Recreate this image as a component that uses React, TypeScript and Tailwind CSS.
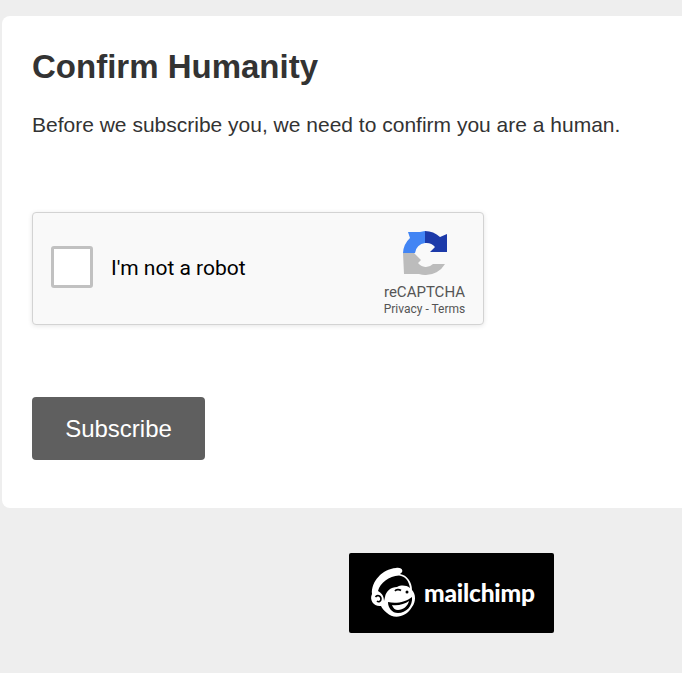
export default function App() {
  return (
    <div className="h-[673px] w-[682px] overflow-hidden bg-[#eeeeee] pt-4 pl-[2px] font-['Liberation_Sans',Arial,sans-serif]">
      <div className="h-[492px] w-[720px] rounded-[8px] bg-white pl-[30px] pt-[31px]">
        <h1 className="text-[33px] leading-[40px] font-bold text-[#333333]">Confirm Humanity</h1>
        <p className="mt-[22px] text-[21px] leading-[32px] text-[#333333]">
          Before we subscribe you, we need to confirm you are a human.
        </p>
        <div className="mt-[71px] flex h-[113px] w-[452px] items-center justify-between rounded-[4px] border border-[#d3d3d3] bg-[#f9f9f9] pl-[18px] pr-[17px] shadow-[0_1px_5px_rgba(0,0,0,0.1)]">
          <div className="flex items-center gap-[18px]">
            <div className="mb-[3px] h-[42px] w-[42px] rounded-[3px] border-[3px] border-[#c1c1c1] bg-white" />
            <span className="mt-[1px] font-['Roboto',sans-serif] text-[21px] text-black">I'm not a robot</span>
          </div>
          <div className="flex w-[83px] shrink-0 flex-col items-center pt-[11px] font-['Roboto',sans-serif]">
            <svg width="44" height="45" viewBox="0 0 44 45">
              <path d="M5 1 L17 1 L22 0 V12 A11 11 0 0 0 12 22 H0 A22 22 0 0 1 7 7 Z" fill="#4285f4" />
              <path d="M22 0 A22 22 0 0 1 37 6 L44 3 V21 H27 L32 16 A11 11 0 0 0 22 12 Z" fill="#1c3aa9" />
              <path d="M0 22 H11 L18 29 L15 32 A10 10 0 0 0 30 33 H42 A22 22 0 0 1 22 44 C20 44 18 43.7 16 43 H1 Z" fill="#bcbcbc" />
            </svg>
            <span className="mt-[7px] whitespace-nowrap text-[15px] leading-[18px] text-[#555555]">reCAPTCHA</span>
            <span className="whitespace-nowrap text-[12px] leading-[16px] text-[#555555]">Privacy - Terms</span>
          </div>
        </div>
        <button className="mt-[72px] flex h-[63px] w-[173px] items-center justify-center rounded-[4px] bg-[#5f5f5f] text-[24px] text-white">
          Subscribe
        </button>
      </div>
      <div className="ml-[347px] mt-[45px] flex h-[80px] w-[205px] items-center rounded-[2px] bg-black pl-[17px]">
        <svg width="56" height="58" viewBox="0 0 56 58" fill="none" className="shrink-0">
          <path d="M6 30 C5 18 16 5 30 4 C37 3 38 8 34 10 C41 11 46 18 46 26 C50 30 50 38 46 43 C40 54 27 55 21 49 C18 47 16 44 15 42 C8 43 3 36 6 30 Z" fill="white" />
          <path d="M12 27 C14 19 23 12 33 11.5 C39 12 43 17 44 24 C40 21 35 21 31 23 C25 23 20 27 19 33 L18 37 C18 31 15 29 12 27 Z" fill="black" />
          <path d="M9.5 33 C11 30.5 15 31.5 15 35 C15 37.5 12.5 38.5 11 37" stroke="black" strokeWidth="1.6" />
          <path d="M29 27 C30 25.5 33 25 35 26.5" stroke="black" strokeWidth="1.6" />
          <circle cx="41" cy="28" r="1.5" fill="black" />
          <path d="M22 38 C30 40 40 38 46 33 C47 42 40 49 32 49 C26 49 22 44 22 38 Z" fill="black" />
          <path d="M26 41 C32 42 39 40 43 37 C42 42 37 46 32 46 C29 46 27 44 26 41 Z" fill="white" />
        </svg>
        <span className="ml-[2px] font-['Lato',sans-serif] text-[24.5px] font-black tracking-[-0.2px] text-white">mailchimp</span>
      </div>
    </div>
  );
}
